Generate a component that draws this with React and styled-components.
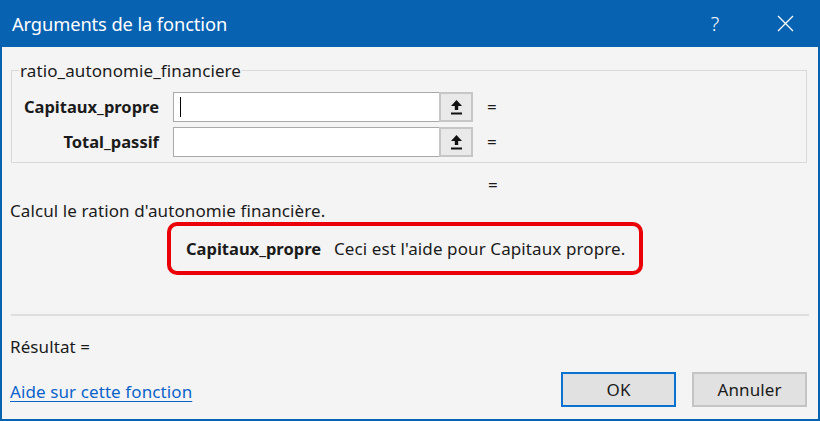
import React from 'react';
import styled, { createGlobalStyle } from 'styled-components';

const GlobalStyle = createGlobalStyle`
  html, body {
    margin: 0;
    padding: 0;
    background: #ffffff;
  }
  * {
    box-sizing: border-box;
  }
`;

const Window = styled.div`
  width: 820px;
  height: 421px;
  display: flex;
  flex-direction: column;
  border: 2px solid #0862b2;
  border-top: none;
  background: #f4f4f4;
  font-family: "Noto Sans", "Open Sans", sans-serif;
  color: #1b1b1b;
  font-size: 17px;
  letter-spacing: 0.1px;
`;

const TitleBar = styled.div`
  height: 47px;
  flex: none;
  display: flex;
  align-items: center;
  background: #0862b2;
  color: #ffffff;
  padding-left: 12px;
  margin: 0 -2px;
`;

const Title = styled.div`
  flex: 1;
  font-size: 18.3px;
  letter-spacing: -0.1px;
`;

const TitleButton = styled.div`
  width: ${props => props.w}px;
  height: 47px;
  display: flex;
  align-items: center;
  justify-content: center;
  font-size: 20px;
  font-weight: 300;
`;

const Content = styled.div`
  flex: 1;
  display: flex;
  flex-direction: column;
  padding: 0 9px 0 8px;
`;

const Group = styled.fieldset`
  margin: 13px 2px 0 1px;
  padding: 11px 0 5px 0;
  border: 1px solid #d9d9d9;
  min-inline-size: 0;
`;

const Legend = styled.legend`
  padding: 0 1px;
  margin-left: 7px;
  line-height: 21px;
  color: #1b1b1b;
`;

const ArgGrid = styled.div`
  display: grid;
  grid-template-columns: 147px 300px auto;
  column-gap: 14px;
  row-gap: 5px;
  align-items: center;
`;

const ArgLabel = styled.div`
  text-align: right;
  font-weight: 700;
  font-size: 16.5px;
  letter-spacing: 0;
  line-height: 30px;
`;

const InputGroup = styled.div`
  display: flex;
  height: 30px;
`;

const Field = styled.div`
  width: 267px;
  height: 30px;
  background: #ffffff;
  border: 1px solid #a9a9a9;
  display: flex;
  align-items: center;
  padding-left: 6px;
`;

const Caret = styled.div`
  width: 1px;
  height: 20px;
  background: #000;
`;

const PickButton = styled.div`
  width: 34px;
  height: 30px;
  margin-left: -1px;
  border: 2px solid #c6c6c6;
  background: #e9e9e9;
  display: flex;
  align-items: center;
  justify-content: center;
`;

const Equals = styled.div`
  line-height: 20px;
  padding-left: ${props => props.indent || 0}px;
`;

const Description = styled.div`
  margin-top: 6px;
  line-height: 20px;
`;

const HelpBox = styled.div`
  margin: 1px 0 0 157px;
  width: 476px;
  height: 53px;
  border: 4px solid #ec0008;
  border-radius: 10px;
  display: flex;
  align-items: center;
  padding-left: 15px;
`;

const HelpName = styled.span`
  font-weight: 700;
  font-size: 16.5px;
  letter-spacing: 0;
  width: 148px;
  flex: none;
`;

const Separator = styled.div`
  margin: 39px 0 0 1px;
  height: 2px;
  background: #dedede;
`;

const Result = styled.div`
  margin-top: 21px;
  line-height: 20px;
`;

const Footer = styled.div`
  margin-top: 15px;
  display: flex;
  align-items: center;
  gap: 16px;
`;

const HelpLink = styled.a`
  flex: 1;
  color: #0b63c9;
  text-decoration: underline;
  text-underline-offset: 3px;
  padding-top: 3px;
`;

const Button = styled.div`
  width: 115px;
  height: 35px;
  display: flex;
  align-items: center;
  justify-content: center;
  background: #e1e1e1;
  border: ${props => (props.primary ? '2px solid #0a72d0' : '2px solid #c4c4c4')};
  color: #1b1b1b;
  margin-right: ${props => (props.last ? 2 : 0)}px;
`;

const UpArrow = () => (
  <svg width="11" height="15" viewBox="0 0 11 15">
    <polygon points="5.5,0 11,6 7.2,6 7.2,10 3.8,10 3.8,6 0,6" fill="#111" />
    <rect x="0" y="12.5" width="11" height="2" fill="#111" />
  </svg>
);

const CloseIcon = () => (
  <svg width="17" height="17" viewBox="0 0 17 17">
    <path d="M1 1 L16 16 M16 1 L1 16" stroke="#fff" strokeWidth="1.3" />
  </svg>
);

const args = [
  { name: 'Capitaux_propre', focused: true },
  { name: 'Total_passif', focused: false },
];

const App = () => (
  <>
    <GlobalStyle />
    <Window>
      <TitleBar>
        <Title>Arguments de la fonction</Title>
        <TitleButton w={40}>?</TitleButton>
        <TitleButton w={34} style={{ marginLeft: 33, marginRight: 18 }}>
          <CloseIcon />
        </TitleButton>
      </TitleBar>
      <Content>
        <Group>
          <Legend>ratio_autonomie_financiere</Legend>
          <ArgGrid>
            {args.map(arg => (
              <React.Fragment key={arg.name}>
                <ArgLabel>{arg.name}</ArgLabel>
                <InputGroup>
                  <Field>{arg.focused && <Caret />}</Field>
                  <PickButton>
                    <UpArrow />
                  </PickButton>
                </InputGroup>
                <Equals>=</Equals>
              </React.Fragment>
            ))}
          </ArgGrid>
        </Group>
        <Equals indent={478} style={{ marginTop: 12 }}>=</Equals>
        <Description>Calcul le ration d'autonomie financière.</Description>
        <HelpBox>
          <HelpName>Capitaux_propre</HelpName>
          <span>Ceci est l'aide pour Capitaux propre.</span>
        </HelpBox>
        <Separator />
        <Result>Résultat =</Result>
        <Footer>
          <HelpLink href="#">Aide sur cette fonction</HelpLink>
          <Button primary>OK</Button>
          <Button last>Annuler</Button>
        </Footer>
      </Content>
    </Window>
  </>
);

export default App;
